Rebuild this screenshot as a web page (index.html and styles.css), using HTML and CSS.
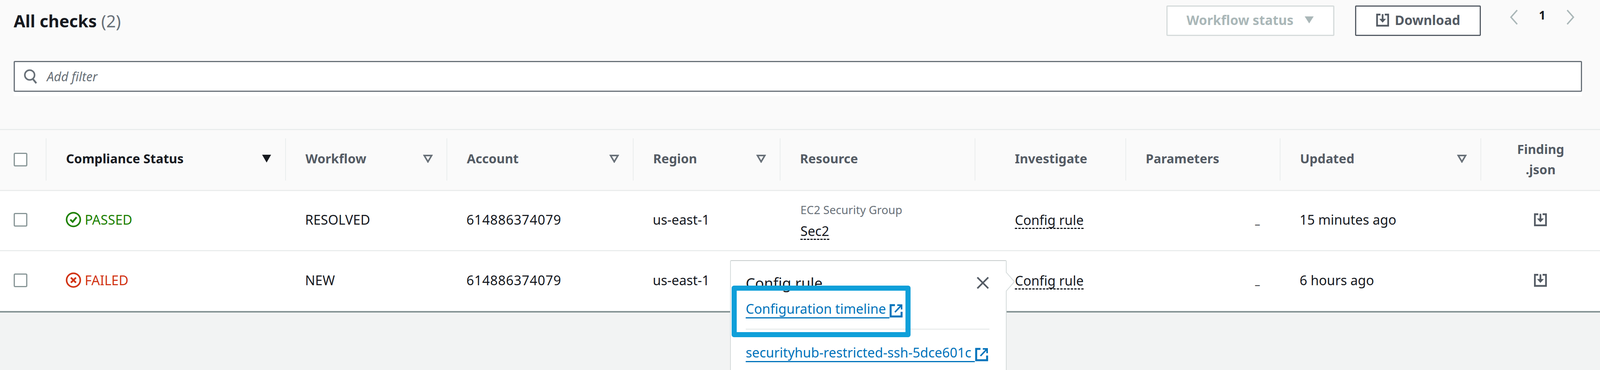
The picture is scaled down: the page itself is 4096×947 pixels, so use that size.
FILE: index.html
```html
<!DOCTYPE html>
<html lang="en">
<head>
<meta charset="utf-8">
<title>All checks</title>
<link rel="stylesheet" href="styles.css">
</head>
<body>
<div class="page">
  <section class="top">
    <div class="head">
      <h1 class="title">All checks <span class="count">(2)</span></h1>
      <div class="actions">
        <button class="btn btn-off">Workflow status
          <svg class="caret" viewBox="0 0 25 20"><path d="M1 1h23L12.500 19z" fill="#aab7b8"/></svg>
        </button>
        <button class="btn btn-dl">
          <svg class="dl-icon" viewBox="0 0 16 16"><path d="M5.500 1.500H1.500V14.500H14.500V1.500H10.500" fill="none" stroke="#545b64" stroke-width="2"/><path d="M8 1v6" stroke="#545b64" stroke-width="2"/><path d="M4 6.500h8L8 11z" fill="#545b64"/></svg>
          Download
        </button>
        <div class="pager">
          <svg class="chev" viewBox="0 0 23 40"><path d="M20 2L4 20l16 18" fill="none" stroke="#aab7b8" stroke-width="3.500"/></svg>
          <span class="pnum">1</span>
          <svg class="chev" viewBox="0 0 23 40"><path d="M3 2l16 18L3 38" fill="none" stroke="#aab7b8" stroke-width="3.500"/></svg>
        </div>
      </div>
    </div>
    <div class="filter-wrap">
      <div class="filter">
        <svg class="search" viewBox="0 0 36 38"><circle cx="16" cy="15" r="12.500" fill="none" stroke="#687078" stroke-width="4"/><path d="M24 25l9 11" stroke="#687078" stroke-width="4.500"/></svg>
        <span class="placeholder">Add filter</span>
      </div>
    </div>
  </section>

  <div class="row row-head">
    <div class="cell"><span class="check"></span></div>
    <div class="hcell"><div class="hin hin-sort hin-active"><span>Compliance Status</span><svg class="sort" viewBox="0 0 25 22"><path d="M1 1h23L12.500 21z" fill="#16191f"/></svg></div></div>
    <div class="hcell"><div class="hin hin-sort"><span>Workflow</span><svg class="sort" viewBox="0 0 25 22"><path d="M3 3h19L12.500 19z" fill="none" stroke="#687078" stroke-width="4"/></svg></div></div>
    <div class="hcell"><div class="hin hin-sort"><span>Account</span><svg class="sort" viewBox="0 0 25 22"><path d="M3 3h19L12.500 19z" fill="none" stroke="#687078" stroke-width="4"/></svg></div></div>
    <div class="hcell"><div class="hin hin-sort"><span>Region</span><svg class="sort" viewBox="0 0 25 22"><path d="M3 3h19L12.500 19z" fill="none" stroke="#687078" stroke-width="4"/></svg></div></div>
    <div class="hcell"><div class="hin"><span>Resource</span></div></div>
    <div class="hcell"><div class="hin hin-wide"><span>Investigate</span></div></div>
    <div class="hcell"><div class="hin"><span>Parameters</span></div></div>
    <div class="hcell"><div class="hin hin-sort"><span>Updated</span><svg class="sort" viewBox="0 0 25 22"><path d="M3 3h19L12.500 19z" fill="none" stroke="#687078" stroke-width="4"/></svg></div></div>
    <div class="hcell"><div class="hin hin-center"><span>Finding<br>.json</span></div></div>
  </div>

  <div class="row row-body">
    <div class="cell"><span class="check"></span></div>
    <div class="cell cell-pad"><span class="status passed"><svg class="status-icon" viewBox="0 0 40 40"><circle cx="20" cy="20" r="17.500" fill="none" stroke="#1d8102" stroke-width="4"/><path d="M12 20l6 6 10-12" fill="none" stroke="#1d8102" stroke-width="4.500"/></svg>PASSED</span></div>
    <div class="cell cell-pad">RESOLVED</div>
    <div class="cell cell-pad digits">614886374079</div>
    <div class="cell cell-pad">us-east-1</div>
    <div class="cell cell-res"><div class="res-label">EC2 Security Group</div><div class="res-name"><span class="dotted">Sec2</span></div></div>
    <div class="cell cell-inv"><span class="dotted">Config rule</span></div>
    <div class="cell cell-param">_</div>
    <div class="cell cell-pad">15 minutes ago</div>
    <div class="cell cell-center"><svg class="dl-icon" viewBox="0 0 16 16"><path d="M5.500 1.500H1.500V14.500H14.500V1.500H10.500" fill="none" stroke="#545b64" stroke-width="2"/><path d="M8 1v6" stroke="#545b64" stroke-width="2"/><path d="M4 6.500h8L8 11z" fill="#545b64"/></svg></div>
  </div>

  <div class="row row-body row-last">
    <div class="cell"><span class="check"></span></div>
    <div class="cell cell-pad"><span class="status failed"><svg class="status-icon" viewBox="0 0 40 40"><circle cx="20" cy="20" r="17.500" fill="none" stroke="#d13212" stroke-width="4"/><path d="M13.500 13.500l13 13M26.500 13.500l-13 13" fill="none" stroke="#d13212" stroke-width="4.500"/></svg>FAILED</span></div>
    <div class="cell cell-pad">NEW</div>
    <div class="cell cell-pad digits">614886374079</div>
    <div class="cell cell-pad">us-east-1</div>
    <div class="cell cell-res"></div>
    <div class="cell cell-inv"><span class="dotted">Config rule</span></div>
    <div class="cell cell-param">_</div>
    <div class="cell cell-pad">6 hours ago</div>
    <div class="cell cell-center"><svg class="dl-icon" viewBox="0 0 16 16"><path d="M5.500 1.500H1.500V14.500H14.500V1.500H10.500" fill="none" stroke="#545b64" stroke-width="2"/><path d="M8 1v6" stroke="#545b64" stroke-width="2"/><path d="M4 6.500h8L8 11z" fill="#545b64"/></svg></div>
  </div>

  <div class="popover">
    <svg class="pop-arrow" viewBox="0 0 24 50"><path d="M0 0L22 25 0 50z" fill="#fff"/><path d="M0 0L22 25 0 50" fill="none" stroke="#d5dbdb" stroke-width="2"/></svg>
    <div class="pop-head">
      <span class="pop-title">Config rule</span>
      <svg class="pop-close" viewBox="0 0 34 32"><path d="M3 2l28 28M31 2L3 30" fill="none" stroke="#545b64" stroke-width="4"/></svg>
    </div>
    <div class="pop-link"><a class="link">Configuration timeline </a><svg class="ext" viewBox="0 0 34 35"><path d="M14 3H3v29h28V20" fill="none" stroke="#0073bb" stroke-width="5"/><path d="M20 3h11v11M31 3L14 21" fill="none" stroke="#0073bb" stroke-width="4"/></svg></div>
    <div class="pop-divider"></div>
    <div class="pop-link pop-link2"><a class="link">securityhub-restricted-ssh-5dce601c </a><svg class="ext" viewBox="0 0 34 35"><path d="M14 3H3v29h28V20" fill="none" stroke="#0073bb" stroke-width="5"/><path d="M20 3h11v11M31 3L14 21" fill="none" stroke="#0073bb" stroke-width="4"/></svg></div>
    <div class="mark"></div>
  </div>
</div>
</body>
</html>
```
FILE: styles.css
```css
* { box-sizing: border-box; }
html, body { margin: 0; padding: 0; }
body {
  font-family: "Noto Sans", "Open Sans", sans-serif;
  font-size: 34px;
  color: #16191f;
  background: #f2f3f3;
}
.page {
  position: relative;
  width: 4096px;
  height: 947px;
  overflow: hidden;
}
.top {
  height: 330px;
  padding: 14px 46px 0 35px;
  background: #fafafa;
}
.head {
  display: flex;
  justify-content: space-between;
  align-items: flex-start;
  height: 78px;
}
.title {
  margin: 15px 0 0;
  font-size: 43px;
  line-height: 50px;
  font-weight: 700;
  color: #16191f;
}
.count { font-weight: 400; color: #687078; }
.actions { display: flex; align-items: flex-start; }
.btn {
  display: flex;
  align-items: center;
  justify-content: center;
  height: 78px;
  font: 700 33.500px "Noto Sans", sans-serif;
  border-radius: 3px;
  background: #fff;
  padding: 0 0 4px;
}
.btn-off {
  width: 430px;
  gap: 28px;
  color: #aab7b8;
  border: 3px solid #d5dbdb;
}
.btn-dl {
  width: 322px;
  gap: 14px;
  margin-left: 53px;
  color: #545b64;
  border: 3px solid #545b64;
}
.caret { width: 25px; height: 20px; }
.dl-icon { width: 35px; height: 35px; }
.pager {
  display: flex;
  align-items: center;
  justify-content: space-between;
  width: 168px;
  margin: 10px 18px 0 73px;
}
.chev { width: 23px; height: 40px; }
.pnum { font-size: 30px; font-weight: 700; line-height: 30px; margin-bottom: 10px; }
.filter-wrap {
  margin-top: 64px;
  padding-bottom: 11px;
  background: #fff;
}
.filter {
  display: flex;
  align-items: center;
  height: 79px;
  padding-left: 22px;
  gap: 24px;
  background: #fff;
  border: 3px solid #687078;
  border-radius: 3px;
}
.search { width: 36px; height: 38px; }
.placeholder { font-size: 32px; font-style: italic; color: #687078; }

.row {
  display: grid;
  grid-template-columns: 117px 613px 413px 477px 376px 499px 386px 395px 514px 306px;
}
.row-head {
  height: 159px;
  padding-bottom: 3px;
  background: #fafafa;
  border-top: 3px solid #eaeded;
  border-bottom: 3px solid #eaeded;
  font-weight: 700;
  font-size: 32.500px;
  color: #545b64;
}
.row-body {
  height: 154px;
  padding-bottom: 5px;
  background: #fff;
  border-bottom: 3px solid #eaeded;
}
.row-last {
  height: 157px;
  border-bottom: 4px solid #879596;
}
.cell { display: flex; align-items: center; padding-left: 35px; }
.check {
  display: block;
  width: 35px;
  height: 35px;
  background: #fff;
  border: 3px solid #879596;
  border-radius: 4px;
}
.hcell { display: flex; align-items: center; }
.hin {
  display: flex;
  align-items: center;
  width: 100%;
  height: 108px;
  padding: 0 35px 5px 50px;
  border-left: 2px solid #eaeded;
}
.hin-sort { justify-content: space-between; }
.hin-active { color: #16191f; }
.hin-wide { padding-left: 101px; }
.hin-center { justify-content: center; text-align: center; line-height: 52px; padding: 0; }
.sort { width: 25px; height: 22px; }
.cell-pad { padding-left: 51px; }
.digits { letter-spacing: 0.800px; }
.status { display: flex; align-items: center; gap: 9px; }
.status-icon { width: 40px; height: 40px; }
.passed { color: #1d8102; }
.failed { color: #d13212; }
.cell-res { display: block; padding: 29px 0 0 53px; }
.res-label { font-size: 29px; line-height: 38px; color: #687078; }
.res-name { line-height: 50px; margin-top: 10px; }
.dotted { display: inline-block; line-height: 40px; border-bottom: 3px dashed #16191f; }
.cell-inv { padding: 4px 0 0 103px; }
.cell-param { justify-content: flex-end; padding: 0 51px 0 0; font-size: 27px; }
.cell-center { justify-content: center; padding-left: 0; }

.popover {
  position: absolute;
  left: 1869px;
  top: 666px;
  width: 708px;
  height: 320px;
  padding: 30px 42px 0 38px;
  background: #fff;
  border: 2px solid #d5dbdb;
  border-top-color: #c6cccc;
  border-radius: 3px;
}
.pop-arrow {
  position: absolute;
  left: 704px;
  top: 28px;
  width: 24px;
  height: 50px;
}
.pop-head {
  display: flex;
  justify-content: space-between;
  align-items: center;
  height: 52px;
}
.pop-title { font-size: 38px; line-height: 52px; }
.pop-close { width: 34px; height: 32px; }
.pop-link {
  display: flex;
  align-items: flex-end;
  margin-top: 15px;
  color: #0073bb;
}
.pop-link2 { margin-top: 33px; }
.link {
  color: #0073bb;
  white-space: pre;
  text-decoration: underline;
  text-decoration-thickness: 3px;
  text-underline-offset: 9px;
  line-height: 50px;
}
.ext { width: 34px; height: 35px; margin: 0 0 2px 0; }
.pop-divider { height: 3px; margin-top: 26px; background: #eaeded; }
.mark {
  position: absolute;
  left: 2px;
  top: 63px;
  width: 458px;
  height: 132px;
  border: 13px solid #0f9fd9;
  border-radius: 6px;
}
```
